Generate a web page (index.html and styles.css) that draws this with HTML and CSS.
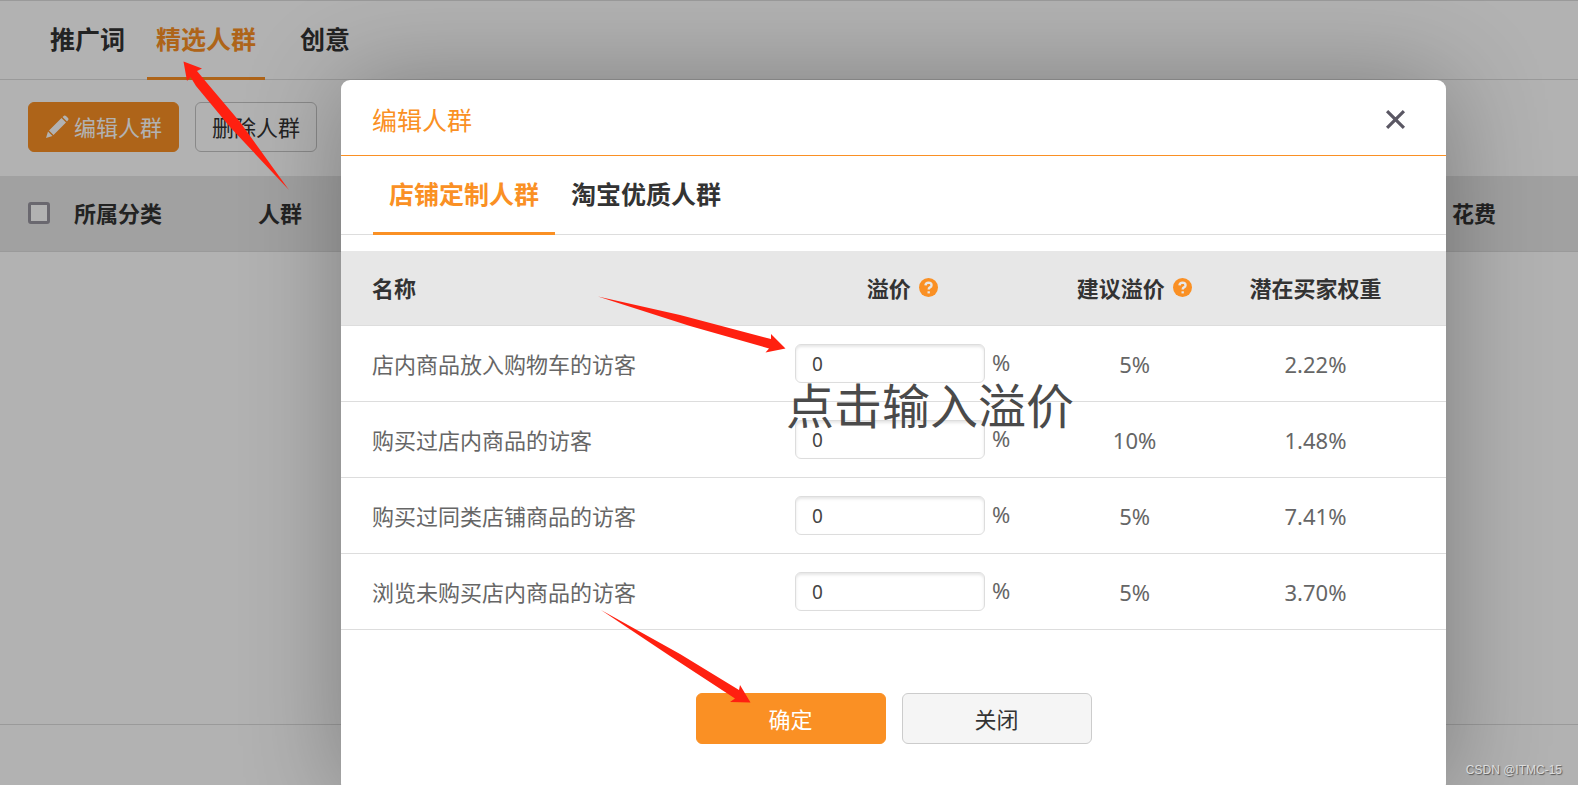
FILE: index.html
```html
<!DOCTYPE html>
<html lang="zh-CN">
<head>
<meta charset="utf-8">
<title>编辑人群</title>
<link rel="stylesheet" href="styles.css">
</head>
<body>
<main class="page">
  <nav class="tabs page-tabs">
    <button class="tab" type="button">推广词</button>
    <button class="tab tab-active" type="button">精选人群</button>
    <button class="tab" type="button">创意</button>
  </nav>
  <div class="toolbar">
    <button class="btn btn-primary" type="button">
      <svg class="pencil" viewBox="0 0 24 24" aria-hidden="true"><path d="M1 23 L3 16.500 L7.500 21 Z M4 15.500 L16.500 3 L21 7.500 L8.500 20 Z M17.500 2 L19 .8 Q20 0 21 1 L23 3 Q24 4 23.200 5 L22 6.500 Z"/></svg>
      <span>编辑人群</span>
    </button>
    <button class="btn btn-ghost" type="button">删除人群</button>
  </div>
  <table class="list">
    <thead>
      <tr>
        <th class="col-check"><input class="check" type="checkbox" aria-label="全选"></th>
        <th class="col-type">所属分类</th>
        <th>人群</th>
        <th class="col-cost">花费</th>
      </tr>
    </thead>
  </table>
  <div class="list-body"></div>
  <footer class="page-foot"></footer>
</main>

<div class="backdrop">
  <section class="dialog" role="dialog" aria-labelledby="dialog-title">
    <header class="dialog-head">
      <h2 class="dialog-title" id="dialog-title">编辑人群</h2>
      <button class="close" type="button" aria-label="关闭窗口">
        <svg class="close-icon" viewBox="0 0 20 20" aria-hidden="true"><path d="M2 2 L18 18 M18 2 L2 18"/></svg>
      </button>
    </header>
    <nav class="tabs dialog-tabs">
      <button class="tab tab-active" type="button">店铺定制人群</button>
      <button class="tab" type="button">淘宝优质人群</button>
    </nav>
    <table class="crowd">
      <thead>
        <tr>
          <th class="col-name">名称</th>
          <th class="col-premium">溢价 <svg class="help" viewBox="0 0 20 20" aria-hidden="true"><circle cx="10" cy="10" r="10"/><path d="M6.800 7.800 Q7 4.900 10.100 4.900 Q13.200 5 13.200 7.500 Q13.200 9 11.500 9.900 Q10.200 10.600 10.200 12.200"/><path d="M10.200 14 V16.200"/></svg></th>
          <th class="col-suggest">建议溢价 <svg class="help" viewBox="0 0 20 20" aria-hidden="true"><circle cx="10" cy="10" r="10"/><path d="M6.800 7.800 Q7 4.900 10.100 4.900 Q13.200 5 13.200 7.500 Q13.200 9 11.500 9.900 Q10.200 10.600 10.200 12.200"/><path d="M10.200 14 V16.200"/></svg></th>
          <th class="col-weight">潜在买家权重</th>
        </tr>
      </thead>
      <tbody>
        <tr>
          <td class="col-name"><label for="p1">店内商品放入购物车的访客</label></td>
          <td><div class="field"><input class="premium" id="p1" type="text" value="0"><span class="unit">%</span></div></td>
          <td>5%</td>
          <td class="col-weight">2.22%</td>
        </tr>
        <tr>
          <td class="col-name"><label for="p2">购买过店内商品的访客</label></td>
          <td><div class="field"><input class="premium" id="p2" type="text" value="0"><span class="unit">%</span></div></td>
          <td>10%</td>
          <td class="col-weight">1.48%</td>
        </tr>
        <tr>
          <td class="col-name"><label for="p3">购买过同类店铺商品的访客</label></td>
          <td><div class="field"><input class="premium" id="p3" type="text" value="0"><span class="unit">%</span></div></td>
          <td>5%</td>
          <td class="col-weight">7.41%</td>
        </tr>
        <tr>
          <td class="col-name"><label for="p4">浏览未购买店内商品的访客</label></td>
          <td><div class="field"><input class="premium" id="p4" type="text" value="0"><span class="unit">%</span></div></td>
          <td>5%</td>
          <td class="col-weight">3.70%</td>
        </tr>
      </tbody>
    </table>
    <footer class="dialog-foot">
      <button class="btn btn-wide btn-primary" type="button">确定</button>
      <button class="btn btn-wide btn-default" type="button">关闭</button>
    </footer>
  </section>
</div>

<svg class="arrows" width="1578" height="785" viewBox="0 0 1578 785" aria-hidden="true">
  <path d="M183.500 61.500 L202 68.500 L197 71 L207 83 L240 122 L289 190 L230 127 L196 86 L190.500 77 L187 81 Z"/>
  <path d="M598 296.500 L680 315 L771 339 L771 334 L785.500 348.500 L765.500 352.500 L769 348.500 L690 326 Z"/>
  <path d="M601 610 L680 654 L739 690 L740 685 L750.500 702.500 L730 702 L735 698.500 L670 656 Z"/>
</svg>
<p class="note">点击输入溢价</p>
<p class="watermark">CSDN @ITMC-15</p>
</body>
</html>
```
FILE: styles.css
```css
* { box-sizing: border-box; }

body {
  margin: 0;
  height: 100vh;
  overflow: hidden;
  position: relative;
  background: #fff;
  color: #333;
  font-family: "Noto Sans", "Noto Sans CJK SC", sans-serif;
  font-size: 22px;
  line-height: 32px;
}

button, input { font: inherit; color: inherit; }
button { cursor: pointer; }

.page {
  height: 100%;
  display: flex;
  flex-direction: column;
  border-top: 1px solid #ddd;
}

.tabs {
  display: flex;
  align-items: stretch;
  height: 79px;
  border-bottom: 1px solid #ddd;
}
.tab {
  margin: 0 0 -1px;
  padding: 0 16px 3px;
  border: 0;
  border-top: 3px solid transparent;
  border-bottom: 3px solid transparent;
  background: none;
  font-size: 25px;
  font-weight: 700;
  white-space: nowrap;
}
.tab-active { color: #fa9024; border-bottom-color: #fa9024; }

.page-tabs { padding-left: 41px; gap: 13px; }
.page-tabs .tab { padding: 0 9px 3px; }
.page-tabs .tab-active { margin-right: 13px; }

.toolbar { display: flex; gap: 16px; padding: 22px 28px 24px; }

.btn {
  display: flex;
  align-items: center;
  justify-content: center;
  gap: 5px;
  height: 50px;
  padding: 0 16px;
  border: 1px solid #ccc;
  border-radius: 6px;
  white-space: nowrap;
}
.btn-primary { background: #fa9024; border-color: #fa9024; color: #fff; }
.btn-ghost { background: none; border-color: #c4c4c4; }
.btn-default { background: #f5f5f5; }
.btn-wide { width: 190px; height: 51px; }
.pencil { width: 24px; height: 24px; fill: #fff; }

.list { width: 100%; border-spacing: 0; table-layout: fixed; }
.list th {
  height: 76px;
  padding: 0 0 1px;
  background: #e7e7e7;
  border-bottom: 1px solid #ddd;
  text-align: left;
}
.list .col-check { width: 74px; padding-left: 28px; }
.list .col-type { width: 184px; }
.list .col-cost { width: 126px; }
.check {
  appearance: none;
  display: block;
  width: 22px;
  height: 22px;
  margin: 0;
  border: 3px solid #98959f;
  border-radius: 3px;
  background: #fff;
}
.list-body { flex: 1; }
.page-foot { height: 61px; border-top: 1px solid #ddd; }

.backdrop {
  position: absolute;
  inset: 0;
  padding: 80px 132px 0 341px;
  background: rgba(0, 0, 0, 0.3);
}
.dialog {
  background: #fff;
  border-radius: 9px;
  box-shadow: 2px 2px 100px rgba(0, 0, 0, 0.3);
}
.dialog-head {
  display: flex;
  align-items: center;
  justify-content: space-between;
  height: 76px;
  padding: 4px 36px 0 31px;
  border-bottom: 1px solid #fa9024;
}
.dialog-title {
  margin: 0;
  color: #fa9024;
  font-size: 25px;
  font-weight: 400;
}
.close { display: flex; padding: 4px; border: 0; background: none; }
.close-icon { width: 21px; height: 21px; fill: none; stroke: #5a5763; stroke-width: 3; }
.dialog-tabs { padding-left: 32px; margin-bottom: 16px; }

.crowd { width: 100%; border-spacing: 0; table-layout: fixed; }
.crowd th, .crowd td {
  height: 76px;
  padding: 0 4px 0 0;
  border-bottom: 1px solid #ddd;
  text-align: center;
  white-space: nowrap;
}
.crowd th { height: 75px; background: #e7e7e7; }
.crowd td { color: #666; }
.crowd .col-name { width: 38%; padding-left: 31px; text-align: left; }
.crowd .col-premium { width: 26%; }
.crowd .col-suggest { width: 16%; }
.crowd .col-weight { padding-right: 40px; }
.help { width: 19px; height: 19px; margin-left: 3px; fill: #fa9024; }
.help path { fill: none; stroke: #e7e7e7; stroke-width: 2.500; }

.field { display: flex; align-items: center; justify-content: center; gap: 7px; }
.premium {
  width: 190px;
  height: 39px;
  padding: 0 16px;
  border: 1px solid #ddd;
  border-radius: 6px;
  background: #fff;
  box-shadow: inset 0 2px 3px rgba(0, 0, 0, 0.1);
  color: #444;
  font-size: 19px;
}
.unit { padding-bottom: 4px; }

.dialog-foot {
  display: flex;
  justify-content: center;
  gap: 16px;
  padding: 63px 0 48px;
}

.arrows { position: absolute; top: 0; left: 0; fill: #ff2010; pointer-events: none; }
.note {
  position: absolute;
  top: 371px;
  left: 786px;
  margin: 0;
  color: #4a4a4a;
  font-size: 48px;
  line-height: 70px;
  white-space: nowrap;
}
.watermark {
  position: absolute;
  right: 16px;
  bottom: 6px;
  margin: 0;
  color: #ddd;
  font-family: "Liberation Sans", sans-serif;
  font-size: 12px;
  line-height: 18px;
  text-shadow: 1px 1px 1px #555;
}
```
